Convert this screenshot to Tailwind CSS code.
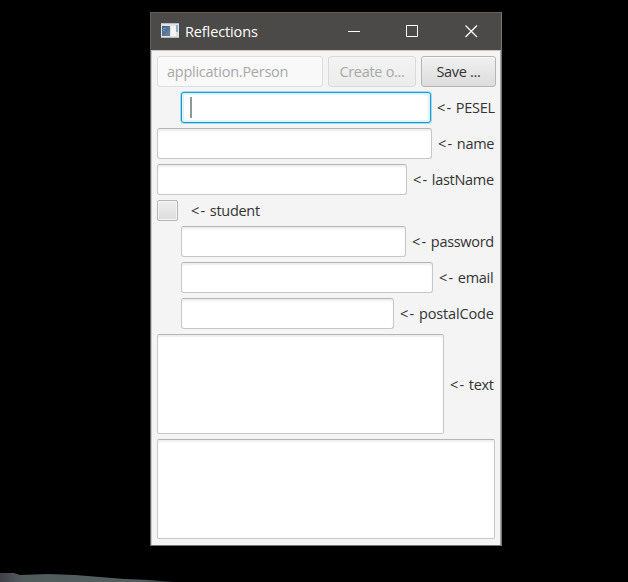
<!DOCTYPE html>
<html lang="en">
<head>
<meta charset="utf-8">
<title>Reflections</title>
<script src="https://cdn.jsdelivr.net/npm/@tailwindcss/browser@4"></script>
</head>
<body class="relative h-[582px] w-[628px] overflow-hidden bg-black pt-3 pl-[150px] font-['Open_Sans','Noto_Sans',sans-serif] text-[14.5px] leading-5 tracking-[-0.3px] text-[#333]">
<svg class="absolute bottom-0 left-0" width="190" height="12" viewBox="0 0 190 12">
  <defs><linearGradient id="ridge"><stop offset="0" stop-color="#403f49"/><stop offset=".12" stop-color="#505b5c"/><stop offset=".8" stop-color="#536060"/><stop offset="1" stop-color="#202828"/></linearGradient></defs>
  <path d="M0 3L14 3L20 5L48 4L75 5L100 7L125 9L150 10L175 12H0Z" fill="url(#ridge)"/>
</svg>
<main class="flex h-[534px] w-[352px] flex-col border border-[#62615f] border-r-[#777] border-b-[#777] bg-[#f4f4f4]">
  <header class="flex h-[37px] shrink-0 items-center bg-[#4c4a48] pl-[10px] text-white">
    <svg class="-mt-[2px] shrink-0" width="18" height="15" viewBox="0 0 18 15">
      <defs><linearGradient id="app" x2="1" y2="1"><stop stop-color="#3d6590"/><stop offset="1" stop-color="#70879b"/></linearGradient></defs>
      <path d="M0 0H18V15H0Z" fill="#dfe3e5"/><path d="M0 0H18V1H0Z" fill="#b5bfc6"/><path d="M1 3H9V13H1Z" fill="url(#app)"/><path d="M2 5H5V6H2ZM2 7H4V8H2Z" fill="#6fa0cc"/><path d="M10 3H15V13H10Z" fill="#f4f4f4"/><path d="M15 2H17V9H15Z" fill="#8fb0c4"/><path d="M0 14H18V15H0Z" fill="#b8bcbe"/>
    </svg>
    <h1 class="ml-[6px] w-[158px] tracking-[-0.12px]">Reflections</h1>
    <svg width="128" height="13" viewBox="0 0 128 13" fill="none" stroke="#fff">
      <path d="M5 6.5H17M63.5 .5H74.500V11.500H63.500Z"/>
    </svg>
    <svg class="-ml-[6px]" width="13" height="13" viewBox="0 0 13 13" stroke="#f5fffc" stroke-width="1.3"><path d="M.5 .5L12 12M12 .5L.5 12"/></svg>
  </header>
  <div class="flex flex-1 flex-col gap-[5px] border-t border-l border-r border-[#c9c9c9] border-r-[#a5a5a5] pt-[5px] pl-[5px]">
    <div class="flex h-[31px] gap-[5px]">
      <div class="w-[166px] rounded-[3px] border border-[#dedede] bg-[#f9f9f9] px-[9px] pt-[5px] tracking-[-0.25px] text-[#a8a8a8]">application.Person</div>
      <div class="w-[88px] rounded-[3px] border border-[#dadada] bg-linear-to-b from-[#f3f3f3] to-[#ececec] pt-[5px] text-center text-[#a8a8a8]">Create o...</div>
      <div class="w-[75px] rounded-[3px] border border-[#b5b5b5] bg-linear-to-b from-[#f1f1f1] to-[#dcdcdc] pt-[5px] text-center shadow-[inset_0_1px_#fafafa]">Save ...</div>
    </div>
    <div class="flex h-[31px] items-center pl-6">
      <div class="h-[31px] w-[250px] rounded-[3px] border border-[#149bcb] bg-white pt-1 pl-2 shadow-[0_0_0_1px_#a4dcef,inset_0_0_0_2px_#e0f3fa]"><div class="h-[21px] w-[2px] bg-[#8e999b]"></div></div>
      <span class="ml-[6px] whitespace-nowrap"><span class="tracking-[1.2px]">&lt;-</span> PESEL</span>
    </div>
    <div class="flex h-[31px] items-center">
      <div class="h-[31px] w-[275px] rounded-[3px] border border-[#c7c7c7] border-t-[#b5b5b5] bg-white shadow-[inset_0_2px_2px_#eee]"></div>
      <span class="ml-[6px] whitespace-nowrap"><span class="tracking-[1.2px]">&lt;-</span> name</span>
    </div>
    <div class="flex h-[31px] items-center">
      <div class="h-[31px] w-[250px] rounded-[3px] border border-[#c7c7c7] border-t-[#b5b5b5] bg-white shadow-[inset_0_2px_2px_#eee]"></div>
      <span class="ml-[6px] whitespace-nowrap"><span class="tracking-[1.2px]">&lt;-</span> lastName</span>
    </div>
    <div class="flex h-[21px] items-center">
      <div class="h-[21px] w-[21px] rounded-[2px] border border-[#b5b5b5] bg-linear-to-b from-[#eee] to-[#dcdcdc] shadow-[inset_0_0_0_1px_#f4f4f4]"></div>
      <span class="ml-[13px] whitespace-nowrap"><span class="tracking-[1.2px]">&lt;-</span> student</span>
    </div>
    <div class="flex h-[31px] items-center pl-6">
      <div class="h-[31px] w-[225px] rounded-[3px] border border-[#c7c7c7] border-t-[#b5b5b5] bg-white shadow-[inset_0_2px_2px_#eee]"></div>
      <span class="ml-[6px] whitespace-nowrap"><span class="tracking-[1.2px]">&lt;-</span> password</span>
    </div>
    <div class="flex h-[31px] items-center pl-6">
      <div class="h-[31px] w-[252px] rounded-[3px] border border-[#c7c7c7] border-t-[#b5b5b5] bg-white shadow-[inset_0_2px_2px_#eee]"></div>
      <span class="ml-[6px] whitespace-nowrap"><span class="tracking-[1.2px]">&lt;-</span> email</span>
    </div>
    <div class="flex h-[31px] items-center pl-6">
      <div class="h-[31px] w-[213px] rounded-[3px] border border-[#c7c7c7] border-t-[#b5b5b5] bg-white shadow-[inset_0_2px_2px_#eee]"></div>
      <span class="ml-[6px] tracking-[-0.15px] whitespace-nowrap"><span class="tracking-[1.2px]">&lt;-</span> postalCode</span>
    </div>
    <div class="flex h-[100px] items-center">
      <div class="h-[100px] w-[287px] rounded-[2px] border border-[#c7c7c7] border-t-[#b5b5b5] bg-white shadow-[inset_0_2px_2px_#eee]"></div>
      <span class="mt-[2px] ml-[6px] whitespace-nowrap"><span class="tracking-[1.2px]">&lt;-</span> text</span>
    </div>
    <div class="h-[100px] w-[338px] rounded-[2px] border border-[#c7c7c7] border-t-[#b5b5b5] bg-white shadow-[inset_0_2px_2px_#eee]"></div>
  </div>
</main>
</body>
</html>
